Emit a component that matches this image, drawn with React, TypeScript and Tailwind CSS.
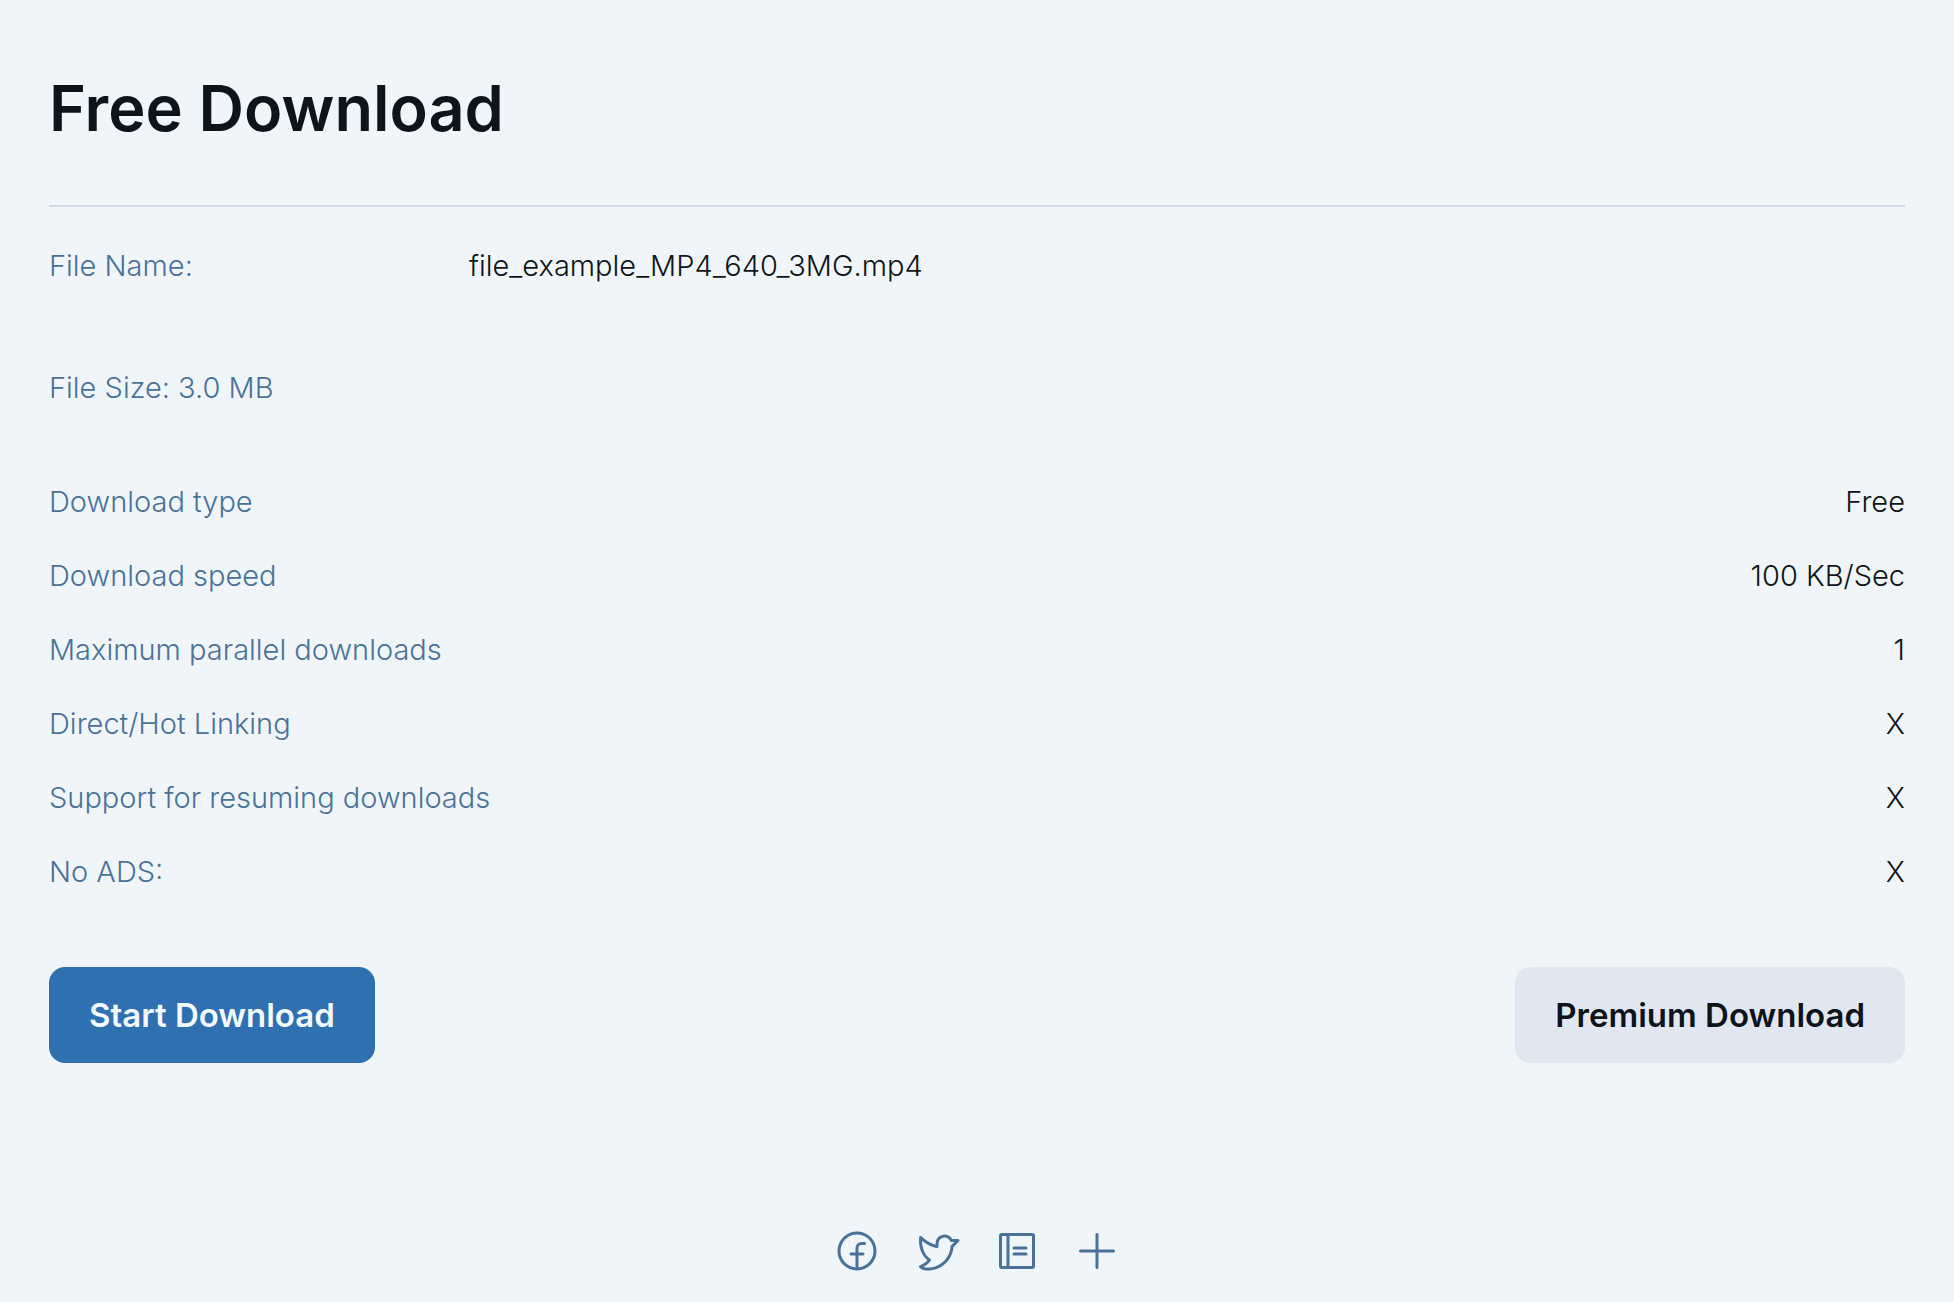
import {
  PiFacebookLogo,
  PiNotebook,
  PiPlus,
  PiTwitterLogo,
} from "react-icons/pi";

const limits = [
  { label: "Download type", value: "Free" },
  { label: "Download speed", value: "100 KB/Sec" },
  { label: "Maximum parallel downloads", value: "1" },
  { label: "Direct/Hot Linking", value: "X" },
  { label: "Support for resuming downloads", value: "X" },
  { label: "No ADS:", value: "X" },
];

const socials = [
  { label: "Facebook", Icon: PiFacebookLogo },
  { label: "Twitter", Icon: PiTwitterLogo },
  { label: "Blog", Icon: PiNotebook },
  { label: "More", Icon: PiPlus },
];

function FileDetails() {
  return (
    <div className="pt-[22px]">
      <dl className="flex h-[74px] items-center">
        <dt className="w-[420px] text-[#4a7299]">File Name:</dt>
        <dd>file_example_MP4_640_3MG.mp4</dd>
      </dl>
      <p className="mt-12 flex h-[74px] items-center text-[#4a7299]">
        File Size: 3.0 MB
      </p>
    </div>
  );
}

function LimitsTable() {
  return (
    <table className="mt-10 w-full">
      <tbody>
        {limits.map(({ label, value }) => (
          <tr key={label} className="h-[74px]">
            <th scope="row" className="text-left font-light text-[#4a7299]">
              {label}
            </th>
            <td className="text-right">{value}</td>
          </tr>
        ))}
      </tbody>
    </table>
  );
}

function SocialLinks() {
  return (
    <footer className="flex justify-center gap-8 pt-[164px] pb-6 text-[#4a7299]">
      {socials.map(({ label, Icon }) => (
        <a key={label} href="#" aria-label={label}>
          <Icon className="size-12" />
        </a>
      ))}
    </footer>
  );
}

export default function App() {
  return (
    <div className="min-h-screen bg-[#f0f5f9] px-[49px] font-['Inter',sans-serif] text-[29px] leading-10 font-light text-[#0d141a]">
      <main>
        <h1 className="border-b-2 border-[#d1dae7] pt-[66px] pb-[54px] text-[63px] leading-[85px] font-semibold">
          Free Download
        </h1>
        <FileDetails />
        <LimitsTable />
        <div className="mt-[58px] flex justify-between">
          <button
            type="button"
            className="h-24 rounded-2xl bg-[#2f70b1] px-10 text-[33px] font-semibold text-[#f3f9fe]"
          >
            Start Download
          </button>
          <button
            type="button"
            className="h-24 rounded-2xl bg-[#e1e7f0] px-10 text-[33px] font-semibold"
          >
            Premium Download
          </button>
        </div>
      </main>
      <SocialLinks />
    </div>
  );
}
